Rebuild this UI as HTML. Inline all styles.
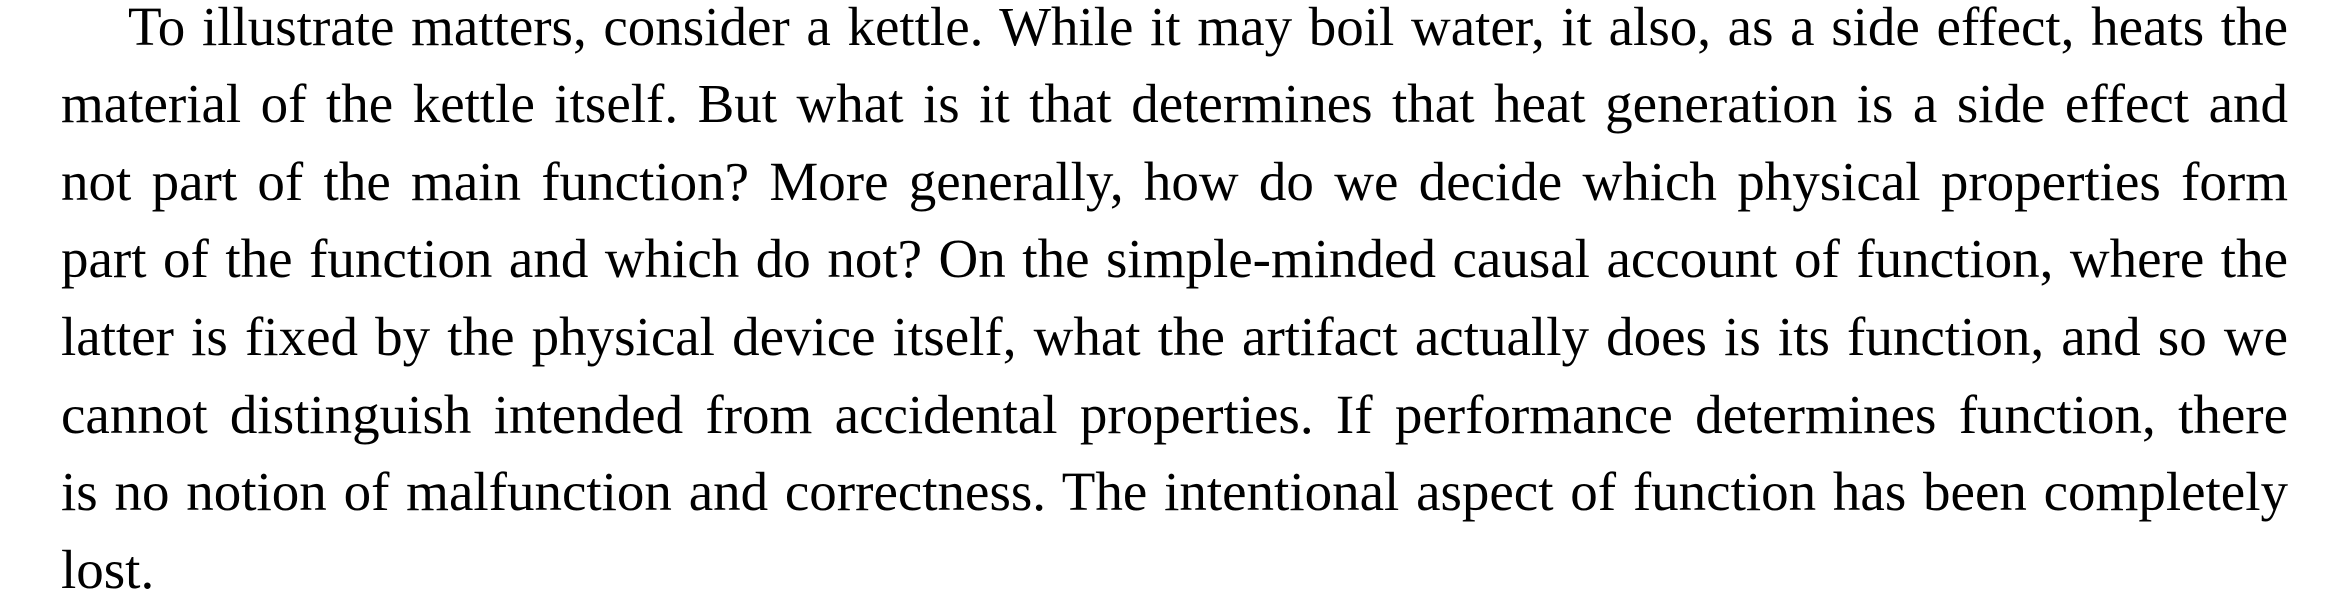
<!DOCTYPE html>
<html><head><meta charset="utf-8"><style>
html,body{margin:0;padding:0;background:#fff;width:2341px;height:612px;overflow:hidden}
.p{position:absolute;left:61px;top:-12.4px;width:2227px;font-family:"Liberation Serif",serif;font-size:55px;line-height:77.6px;color:#000}
.l{text-align:justify;text-align-last:justify;white-space:nowrap;height:77.6px}
.i{padding-left:67px}
.last{text-align:left;text-align-last:left}
</style></head><body>
<div class="p">
<div class="l i">To illustrate matters, consider a kettle. While it may boil water, it also, as a side effect, heats the</div>
<div class="l">material of the kettle itself. But what is it that determines that heat generation is a side effect and</div>
<div class="l">not part of the main function? More generally, how do we decide which physical properties form</div>
<div class="l">part of the function and which do not? On the simple-minded causal account of function, where the</div>
<div class="l">latter is fixed by the physical device itself, what the artifact actually does is its function, and so we</div>
<div class="l">cannot distinguish intended from accidental properties. If performance determines function, there</div>
<div class="l">is no notion of malfunction and correctness. The intentional aspect of function has been completely</div>
<div class="l last">lost.</div>
</div>
</body></html>
